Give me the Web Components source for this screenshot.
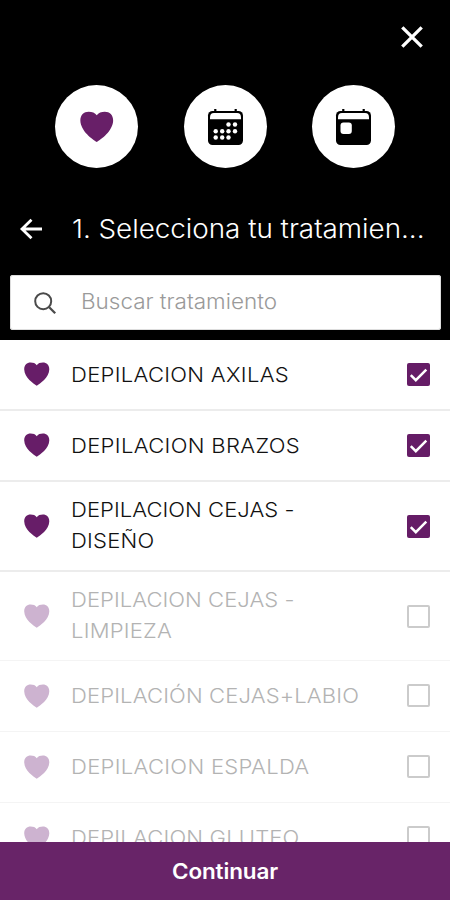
<!DOCTYPE html>
<html lang="es">
<head>
<meta charset="utf-8">
<title>Selecciona tu tratamiento</title>
<style>
html, body { margin: 0; height: 100%; background: #fff; }
body { font-family: Inter, "Liberation Sans", sans-serif; overflow: hidden; }
</style>
</head>
<body>
<booking-screen></booking-screen>
<script>
const HEART = '<path d="M12 22.300C9 20.500 .5 14.500 .2 7 .1 2.800 2.800 .5 6.200 .5c2.400 0 4.600 .7 5.800 2.500C13.200 1.200 15.400 .5 17.800 .5 21.200 .5 23.900 2.800 23.800 7 23.500 14.500 15 20.500 12 22.300Z"/>';

function define(name, html, setup) {
  const tpl = document.createElement('template');
  tpl.innerHTML = html;
  customElements.define(name, class extends HTMLElement {
    constructor() {
      super();
      this.attachShadow({ mode: 'open' }).append(tpl.content.cloneNode(true));
    }
    connectedCallback() { if (setup) setup(this, this.shadowRoot); }
  });
}

/* Single line of slightly extended text, tracked out to fill a given width. */
define('fit-text', `
<style>:host { display: block; white-space: nowrap; } span { display: inline-block; transform-origin: 0 50%; }</style>
<span></span>`, (host, root) => {
  const stretch = 1.07;
  const span = root.querySelector('span');
  span.textContent = host.getAttribute('text');
  const width = Number(host.getAttribute('width'));
  const n = span.textContent.length;
  const natural = span.getBoundingClientRect().width;
  span.style.letterSpacing = ((width / stretch - natural) / n).toFixed(3) + 'px';
  span.style.transform = `scaleX(${stretch})`;
  host.style.width = width + 'px';
});

define('app-icon', `
<style>:host { display: block; flex: none; } svg { display: block; width: 100%; height: 100%; overflow: visible; }</style>
<svg></svg>`, (host, root) => {
  const dots = [[20.5,15.5],[27,15.5],[7.7,22.2],[14.2,22.2],[20.5,22.2],[27,22.2],[7.7,28.5],[14.2,28.5],[20.5,28.5]]
    .map(([x, y]) => `<circle cx="${x}" cy="${y}" r="2.2" fill="#fff"/>`).join('');
  const cal = '<path d="M7.300 0v4M27.700 0v4" stroke="#000" stroke-width="2.200"/><rect x="0" y="2" width="35" height="34" rx="4.500" fill="#000"/><path d="M2 10.300V8.300Q2 4 6 4H29Q33 4 33 8.300V10.300Z" fill="#fff"/>';
  const art = {
    heart: ['0 0 24 22.300', HEART],
    month: ['0 0 35 36', cal + dots],
    day: ['0 0 35 36', cal + '<rect x="4.500" y="13.500" width="11.300" height="11.500" rx="3" fill="#fff"/>'],
    close: ['0 0 22 22', '<path d="M1.300 1.300 20.700 20.700M20.700 1.300 1.300 20.700" stroke="#fff" stroke-width="3.300"/>'],
    back: ['0 0 22 20', '<path d="M22 10H2M11.500 .8 2 10l9.500 9.200" fill="none" stroke="#fff" stroke-width="2.800"/>'],
    search: ['0 0 22 22', '<circle cx="9.200" cy="9.200" r="8" fill="none" stroke="#4a4a4a" stroke-width="2"/><path d="m15.200 15.200 6 6" stroke="#4a4a4a" stroke-width="2.300"/>']
  }[host.getAttribute('name')];
  const svg = root.querySelector('svg');
  svg.setAttribute('viewBox', art[0]);
  svg.setAttribute('fill', 'currentColor');
  svg.innerHTML = art[1];
});

define('step-circle', `
<style>:host { display: grid; place-items: center; width: 83px; height: 83px; border-radius: 50%; background: #fff; color: #681f68; }</style>
<slot></slot>`);

define('search-box', `
<style>
:host { display: flex; align-items: center; box-sizing: border-box; height: 55px; margin: 0 9.500px 0 10px; padding-left: 24px; gap: 25px; border-radius: 3px; background: #fff; color: #9a9a9a; font-size: 21px; font-weight: 300; box-shadow: inset 0 0 0 1px #ddd; }
app-icon { width: 22px; height: 22px; }
fit-text { line-height: 26px; margin-top: -1px; }
</style>
<app-icon name="search"></app-icon><fit-text text="Buscar tratamiento" width="196"></fit-text>`);

define('check-box', `
<style>
:host { display: block; flex: none; box-sizing: border-box; width: 23px; height: 23px; border-radius: 2px; border: 2px solid #cbcbcb; }
:host([checked]) { border: 0; background: #651c66; }
svg { display: none; width: 23px; height: 23px; }
:host([checked]) svg { display: block; }
</style>
<svg viewBox="0 0 23 23"><path d="m3.800 12.200 5 5L19.300 6.600" fill="none" stroke="#fff" stroke-width="2.500"/></svg>`);

define('treatment-row', `
<style>
:host { display: flex; align-items: center; box-sizing: border-box; flex: none; padding: 0 20.500px 0 23.500px; border-bottom: 2px solid #ececec; color: #111; font-size: 20.600px; font-weight: 300; }
:host(:not([checked])) { color: #b3b3b3; border-bottom: 1px solid #f4f4f4; }
:host([tall]) { padding-top: 1px; }
:host([tall]) .label { margin-top: -2px; }
app-icon { width: 25.500px; height: 23.700px; color: #671d68; }
:host(:not([checked])) app-icon { color: #cdb3d0; }
.label { flex: 1; padding-left: 21.700px; line-height: 31px; }
</style>
<app-icon name="heart"></app-icon><div class="label"></div><check-box></check-box>`, (host, root) => {
  host.style.height = host.getAttribute('height') + 'px';
  const widths = host.getAttribute('widths').split(',');
  host.getAttribute('lines').split('|').forEach((line, i) => {
    const t = document.createElement('fit-text');
    t.setAttribute('text', line);
    t.setAttribute('width', widths[i]);
    root.querySelector('.label').append(t);
  });
  root.querySelector('check-box').toggleAttribute('checked', host.hasAttribute('checked'));
});

define('action-bar', `
<style>:host { display: flex; justify-content: center; align-items: center; flex: none; height: 58px; background: #682468; color: #fff; font-size: 21px; font-weight: 600; }</style>
<slot></slot>`);

define('booking-screen', `
<style>
:host { display: flex; flex-direction: column; height: 900px; }
header { flex: none; height: 339.500px; background: #000; color: #fff; }
.top { display: flex; justify-content: flex-end; padding: 26px 27.500px 0 0; height: 59px; box-sizing: border-box; }
.top app-icon { width: 22px; height: 22px; }
.steps { display: flex; gap: 45.500px; padding: 26px 0 0 55.200px; }
.title { display: flex; align-items: center; height: 40px; margin: 41px 0 26px; padding-left: 20px; gap: 29.500px; font-size: 26px; font-weight: 350; }
.title app-icon { width: 22px; height: 20px; }
.title fit-text { line-height: 32px; }
main { flex: 1; min-height: 0; overflow: hidden; display: flex; flex-direction: column; }
.cal { width: 35px; height: 36px; }
.heart { width: 33.500px; height: 31px; }
</style>
<header>
  <div class="top"><app-icon name="close"></app-icon></div>
  <div class="steps">
    <step-circle><app-icon class="heart" name="heart"></app-icon></step-circle>
    <step-circle><app-icon class="cal" name="month"></app-icon></step-circle>
    <step-circle><app-icon class="cal" name="day"></app-icon></step-circle>
  </div>
  <div class="title"><app-icon name="back"></app-icon><fit-text text="1. Selecciona tu tratamien..." width="352.500"></fit-text></div>
  <search-box></search-box>
</header>
<main>
  <treatment-row checked height="71" lines="DEPILACION AXILAS" widths="218"></treatment-row>
  <treatment-row checked height="71" lines="DEPILACION BRAZOS" widths="229"></treatment-row>
  <treatment-row tall checked height="90" lines="DEPILACION CEJAS -|DISEÑO" widths="223.500,83.500"></treatment-row>
  <treatment-row tall height="89.500" lines="DEPILACION CEJAS -|LIMPIEZA" widths="223.500,101"></treatment-row>
  <treatment-row height="70.500" lines="DEPILACIÓN CEJAS+LABIO" widths="288"></treatment-row>
  <treatment-row height="71" lines="DEPILACION ESPALDA" widths="238.500"></treatment-row>
  <treatment-row height="71" lines="DEPILACION GLUTEO" widths="228.500"></treatment-row>
</main>
<action-bar><fit-text text="Continuar" width="106"></fit-text></action-bar>`);
</script>
</body>
</html>
